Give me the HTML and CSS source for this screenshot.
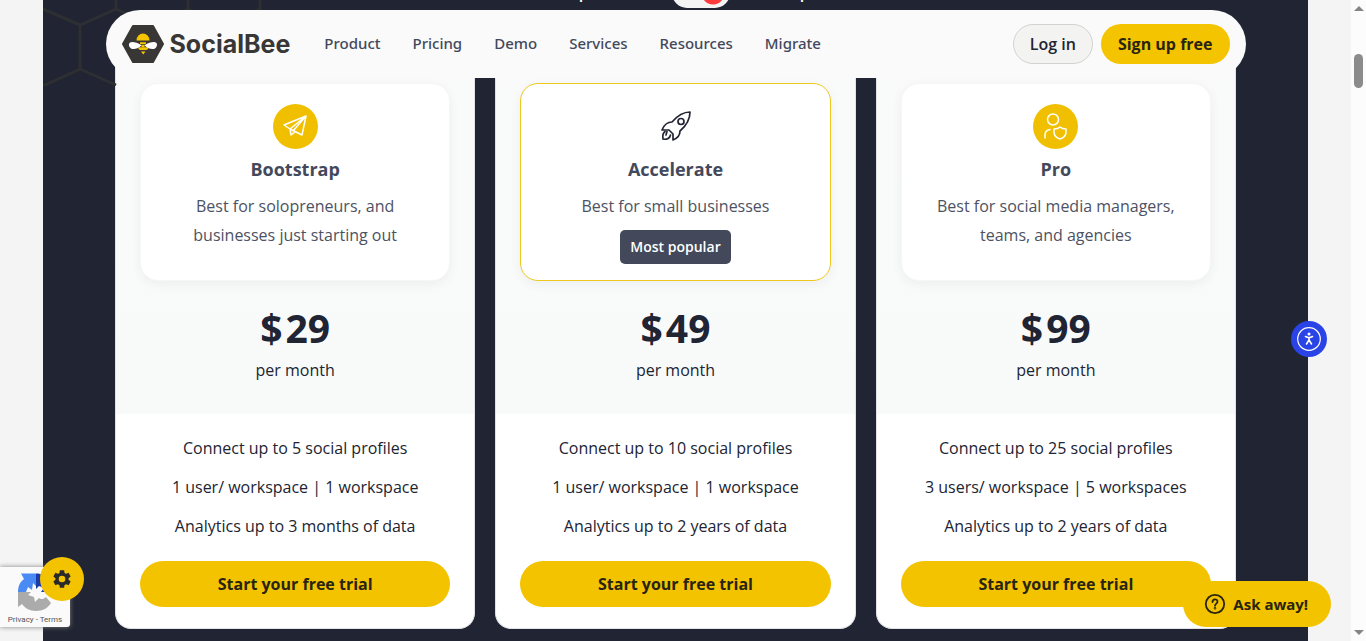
FILE: index.html
```html
<!DOCTYPE html>
<html lang="en">
<head>
    <meta charset="UTF-8">
    <meta name="viewport" content="width=device-width, initial-scale=1.0">
    <title>SocialBee Pricing</title>
    <link rel="stylesheet" href="styles.css">
</head>
<body>
<div class="page">
    <header class="header">
        <a class="logo" href="#">
            <svg width="42" height="38" viewBox="0 0 42 38" aria-hidden="true">
                <path d="M11 1H31L41 19L31 37H11L1 19Z" fill="#383735" stroke="#383735" stroke-width="2" stroke-linejoin="round"/>
                <path d="M14.500 15.500A6.500 7 0 0 1 27.500 15.500ZM18 17.300H24V19.300H18ZM19.500 20H22.500V22H19.500ZM16.300 22.300H26.300C26.300 24 25.500 25 24 25H18.500C17 25 16.300 24 16.300 22.300ZM19 26.500H23.500L21.200 29.500Z" fill="#f5c400"/>
                <path d="M19.500 20.500C16 17.500 13 17 10 17C7 17 6 20 8 22.500C10 25 15 24.500 19.500 20.500ZM22.500 20.500C26 17.500 29 17 32 17C35 17 36 20 34 22.500C32 25 27 24.500 22.500 20.500Z" fill="#fff"/>
            </svg>
            <span>SocialBee</span>
        </a>
        <nav class="nav">
            <a href="#">Product</a>
            <a href="#">Pricing</a>
            <a href="#">Demo</a>
            <a href="#">Services</a>
            <a href="#">Resources</a>
            <a href="#">Migrate</a>
        </nav>
        <div class="actions">
            <a class="login" href="#">Log in</a>
            <a class="signup" href="#">Sign up free</a>
        </div>
    </header>

    <main class="pricing">
        <svg class="honeycomb" width="280" height="86" viewBox="0 0 280 86" aria-hidden="true">
            <path d="M0 9L37 25L73 9V-5M37 25V69L0 86M37 69L73 85M73 9L109 25L145 9V-5M145 9L181 25L217 9V-5"/>
        </svg>
        <div class="billing">
            <label for="billing">Invoiced per month</label>
            <input type="checkbox" id="billing" checked>
            <label for="billing">Annual plans</label>
        </div>
        <div class="plans">
            <section class="plan">
                <div class="plan-top">
                    <div class="plan-box">
                        <svg class="plan-icon" width="45" height="45" viewBox="0 0 45 45" aria-hidden="true">
                            <circle cx="22.500" cy="22.500" r="22.500" fill="#f0c000"/>
                            <path d="M33 12L11 21L17 25L29 31ZM33 12L17 25L18 31L22 28M33 12L20 27" fill="none" stroke="#fff" stroke-width="1.500" stroke-linejoin="round" stroke-linecap="round"/>
                        </svg>
                        <h3>Bootstrap</h3>
                        <p>Best for solopreneurs, and businesses just starting out</p>
                    </div>
                    <div class="price"><span>$</span>29</div>
                    <div class="period">per month</div>
                </div>
                <ul class="features">
                    <li>Connect up to 5 social profiles</li>
                    <li>1 user/ workspace | 1 workspace</li>
                    <li>Analytics up to 3 months of data</li>
                </ul>
                <a class="trial" href="#">Start your free trial</a>
            </section>
            <section class="plan">
                <div class="plan-top">
                    <div class="plan-box popular">
                        <svg class="plan-icon" width="45" height="45" viewBox="0 0 45 45" fill="none" stroke="#222433" stroke-width="1.700" stroke-linejoin="round" stroke-linecap="round" aria-hidden="true">
                            <path d="M37 8C31 8 25 11 19 18C15 18 11 21 9 26L16 26L20 30L20 36C25 34 27 31 27 27C34 21 37 15 37 8Z"/>
                            <circle cx="28" cy="17.500" r="3"/>
                            <path d="M12 27.500C10 29 9.500 32 10 35C14 36 17 34 17.500 31M14 27.500L13 31"/>
                        </svg>
                        <h3>Accelerate</h3>
                        <p>Best for small businesses</p>
                        <span class="badge">Most popular</span>
                    </div>
                    <div class="price"><span>$</span>49</div>
                    <div class="period">per month</div>
                </div>
                <ul class="features">
                    <li>Connect up to 10 social profiles</li>
                    <li>1 user/ workspace | 1 workspace</li>
                    <li>Analytics up to 2 years of data</li>
                </ul>
                <a class="trial" href="#">Start your free trial</a>
            </section>
            <section class="plan">
                <div class="plan-top">
                    <div class="plan-box">
                        <svg class="plan-icon" width="45" height="45" viewBox="0 0 45 45" aria-hidden="true">
                            <circle cx="22.500" cy="22.500" r="22.500" fill="#f0c000"/>
                            <g fill="none" stroke="#fff" stroke-width="1.500" stroke-linejoin="round" stroke-linecap="round">
                                <circle cx="20" cy="15.500" r="5.500"/>
                                <path d="M12 34V31C12 28 14 26 17 25.500M27 23C29 25 31 25 33 25V28C33 32 30 34 27 35C24 34 21 32 21 28V25C23 25 25 25 27 23Z"/>
                            </g>
                        </svg>
                        <h3>Pro</h3>
                        <p>Best for social media managers, teams, and agencies</p>
                    </div>
                    <div class="price"><span>$</span>99</div>
                    <div class="period">per month</div>
                </div>
                <ul class="features">
                    <li>Connect up to 25 social profiles</li>
                    <li>3 users/ workspace | 5 workspaces</li>
                    <li>Analytics up to 2 years of data</li>
                </ul>
                <a class="trial" href="#">Start your free trial</a>
            </section>
        </div>
    </main>

    <div class="recaptcha">
        <svg width="36" height="40" viewBox="0 0 36 40" aria-hidden="true">
            <path d="M1 20C1 14 3 10 7 7L4 1.500H19V14L16 11L15 18L11 15L9 20Z" fill="#4a8af4"/>
            <path d="M19 1.500C25 1.500 29 4 32 8L35 4V20H24L27 16L22 14L19 17Z" fill="#1c3aa9"/>
            <path d="M1 20H14L11 23L17 25L18 30L22 26C24 28 27 27 29 25L34 31C31 36 26 39 19 39C12 39 8 36 5 32L1 35Z" fill="#ababab"/>
        </svg>
        <div><a href="#">Privacy</a> - <a href="#">Terms</a></div>
    </div>
    <button class="settings" aria-label="Cookie settings">
        <svg width="22" height="22" viewBox="0 0 24 24" aria-hidden="true">
            <path fill="#292929" d="M19.140 12.940c.04-.3.06-.61.06-.94 0-.32-.02-.64-.07-.94l2.030-1.580c.18-.14.23-.41.12-.61l-1.920-3.320c-.12-.22-.37-.29-.59-.22l-2.390.96c-.5-.38-1.030-.7-1.620-.94l-.36-2.540c-.04-.24-.24-.41-.48-.41h-3.840c-.24 0-.43.17-.47.41l-.36 2.540c-.59.24-1.130.57-1.620.94l-2.390-.96c-.22-.08-.47 0-.59.22L2.740 8.870c-.12.21-.08.47.12.61l2.030 1.580c-.05.3-.09.63-.09.94s.02.64.07.94l-2.030 1.580c-.18.14-.23.41-.12.61l1.920 3.320c.12.22.37.29.59.22l2.390-.96c.5.38 1.030.7 1.620.94l.36 2.540c.05.24.24.41.48.41h3.840c.24 0 .44-.17.47-.41l.36-2.540c.59-.24 1.130-.56 1.620-.94l2.390.96c.22.08.47 0 .59-.22l1.920-3.320c.12-.22.07-.47-.12-.61l-2.010-1.580zM12 15.600A3.600 3.600 0 1 1 12 8.400a3.600 3.600 0 0 1 0 7.200z"/>
        </svg>
    </button>
    <button class="accessibility" aria-label="Accessibility">
        <svg width="24" height="24" viewBox="0 0 24 24" fill="none" stroke="#fff" aria-hidden="true">
            <circle cx="12" cy="12" r="11.300" stroke-width="1.200"/>
            <circle cx="12" cy="7" r="1.500" fill="#fff" stroke="none"/>
            <path d="M8.500 9.500L11 10.500H13L15.500 9.500M12 10.500V13L9.500 17M12 13L14.500 17" stroke-width="1.600" stroke-linecap="round" stroke-linejoin="round"/>
        </svg>
    </button>
    <button class="chat">
        <svg width="22" height="22" viewBox="0 0 22 22" fill="none" stroke="#292410" stroke-width="1.800" stroke-linecap="round" aria-hidden="true">
            <circle cx="11" cy="11" r="9.200"/>
            <path d="M8.500 9C8.500 5.500 13.500 5.500 13.500 8.700C13.500 10.500 11 10.700 11 12.700"/>
            <circle cx="11" cy="15.300" r="0.400"/>
        </svg>
        Ask away!
    </button>
</div>
<div class="scrollbar">
    <span class="arrow-up"></span>
    <span class="thumb"></span>
    <span class="arrow-down"></span>
</div>
</body>
</html>
```

FILE: styles.css
```css
* {
    box-sizing: border-box;
}
body {
    font-family: "Open Sans", sans-serif;
    font-size: 16px;
    color: #212432;
    background: #f4f4f4;
    display: flex;
    height: 100vh;
    margin: 0;
    overflow: hidden;
}
a {
    color: inherit;
    text-decoration: none;
}
h3, p, ul {
    margin: 0;
    padding: 0;
}
button {
    font-family: inherit;
    border: none;
    padding: 0;
    cursor: pointer;
}
.page {
    flex: 1;
    position: relative;
    overflow: hidden;
}

/* header */
.header {
    position: absolute;
    z-index: 2;
    top: 10px;
    left: 0;
    right: 0;
    margin: 0 auto;
    width: calc(100% - 40px);
    max-width: 1140px;
    height: 68px;
    padding: 0 16px;
    border-radius: 34px;
    background: #fafafa;
    display: flex;
    align-items: center;
}
.logo {
    display: flex;
    align-items: center;
    gap: 6px;
    color: #383735;
    font-family: Inter, sans-serif;
    font-size: 25px;
    font-weight: 700;
}
.logo svg {
    flex: none;
}
.nav {
    display: flex;
    gap: 32px;
    margin-left: 34px;
    padding-bottom: 2px;
    color: #43495b;
    font-family: "Noto Sans", sans-serif;
    font-size: 15px;
    font-weight: 500;
}
.actions {
    display: flex;
    gap: 8px;
    margin-left: auto;
}
.login, .signup {
    height: 40px;
    padding: 0 17px;
    border-radius: 20px;
    line-height: 40px;
}
.login {
    padding: 0 16px;
    border: 1px solid #d2d2d2;
    background: #f3f4f2;
    font-weight: 600;
    line-height: 38px;
}
.signup {
    background: #f5c400;
    color: #292410;
    font-weight: 700;
}

/* pricing */
.pricing {
    position: relative;
    max-width: 1265px;
    min-height: 100%;
    margin: 0 auto;
    padding: 0 72px 13px;
    background: #212432;
}
.honeycomb {
    position: absolute;
    top: 0;
    left: 0;
    fill: none;
    stroke: #2d2f32;
    stroke-width: 3;
}
.billing {
    display: flex;
    justify-content: center;
    align-items: flex-end;
    gap: 11px;
    height: 8px;
    color: #fff;
    font-weight: 600;
    line-height: 28px;
}
.billing label {
    padding-bottom: 2px;
}
.billing input {
    appearance: none;
    width: 58px;
    height: 30px;
    margin: 0;
    border-radius: 15px;
    background: radial-gradient(circle at 41px 15px, #ff3b3b 11px, #f4f4f4 12px);
}
.plans {
    display: grid;
    grid-template-columns: repeat(3, 1fr);
    gap: 20px;
    padding-top: 50px;
    align-items: start;
}
.plan {
    background: #fff;
    border: 1px solid #e0e2e5;
    border-top: none;
    border-radius: 0 0 16px 16px;
    padding-bottom: 21px;
    text-align: center;
}
.plan-top {
    background: linear-gradient(#fafafa, #f8fafa);
    padding: 25px 24px 30px;
}
.plan-box {
    height: 198px;
    padding: 20px 30px 0;
    border: 1px solid #f6f6f6;
    border-radius: 18px;
    background: #fff;
    box-shadow: 0 3px 12px rgba(0, 0, 0, 0.05);
}
.popular {
    border-color: #eec81c;
}
.plan-icon {
    display: block;
    margin: 0 auto;
}
.plan-box h3 {
    margin: 7px 0 10px;
    color: #43495b;
    font-size: 18px;
    font-weight: 700;
    line-height: 26px;
}
.plan-box p {
    color: #4c5263;
    line-height: 29px;
}
.badge {
    display: inline-block;
    margin-top: 9px;
    padding: 0 10px;
    border-radius: 5px;
    background: #43495b;
    color: #fff;
    font-size: 14px;
    font-weight: 600;
    line-height: 34px;
}
.price {
    display: flex;
    justify-content: center;
    gap: 3px;
    margin-top: 19px;
    font-size: 39px;
    font-weight: 700;
    line-height: 56px;
}
.period {
    line-height: 28px;
}
.features {
    padding: 20px 0;
    list-style: none;
}
.features li {
    line-height: 29px;
    margin-bottom: 10px;
}
.features li:last-child {
    margin-bottom: 0;
}
.trial {
    display: block;
    margin: 0 24px;
    border-radius: 23px;
    background: #f3c300;
    color: #292410;
    font-weight: 700;
    line-height: 46px;
}

/* floating widgets */
.recaptcha {
    position: absolute;
    z-index: 3;
    left: 0;
    bottom: 14px;
    width: 70px;
    height: 60px;
    padding-top: 5px;
    border-radius: 0 3px 3px 0;
    background: #fafafa;
    box-shadow: 0 0 5px #808080;
    color: #555;
    font-family: Roboto, sans-serif;
    font-size: 8px;
    line-height: 15px;
    text-align: center;
}
.recaptcha svg {
    display: block;
    margin: 0 auto;
}
.settings, .accessibility, .chat {
    position: absolute;
    z-index: 4;
    display: flex;
    justify-content: center;
    align-items: center;
}
.settings {
    left: 40px;
    bottom: 40px;
    width: 44px;
    height: 44px;
    border-radius: 50%;
    background: #f3c300;
}
.accessibility {
    right: 24px;
    top: 321px;
    width: 36px;
    height: 36px;
    border-radius: 50%;
    background: #2a43e6;
}
.chat {
    right: 20px;
    bottom: 14px;
    height: 46px;
    gap: 7px;
    padding: 0 23px 0 21px;
    border-radius: 23px;
    background: #f3c300;
    color: #292410;
    font-family: "Noto Sans", sans-serif;
    font-size: 15px;
    font-weight: 700;
}

/* scrollbar */
.scrollbar {
    display: flex;
    flex-direction: column;
    align-items: center;
    width: 15px;
    padding: 6px 0;
    background: #fcfcfc;
}
.arrow-up, .arrow-down {
    border: 5px solid transparent;
}
.arrow-up {
    border-top: none;
    border-bottom-color: #858585;
}
.arrow-down {
    border-bottom: none;
    border-top-color: #858585;
    margin-top: auto;
}
.thumb {
    width: 9px;
    height: 34px;
    margin-top: 43px;
    border-radius: 5px;
    background: #8b8b8b;
}
```
